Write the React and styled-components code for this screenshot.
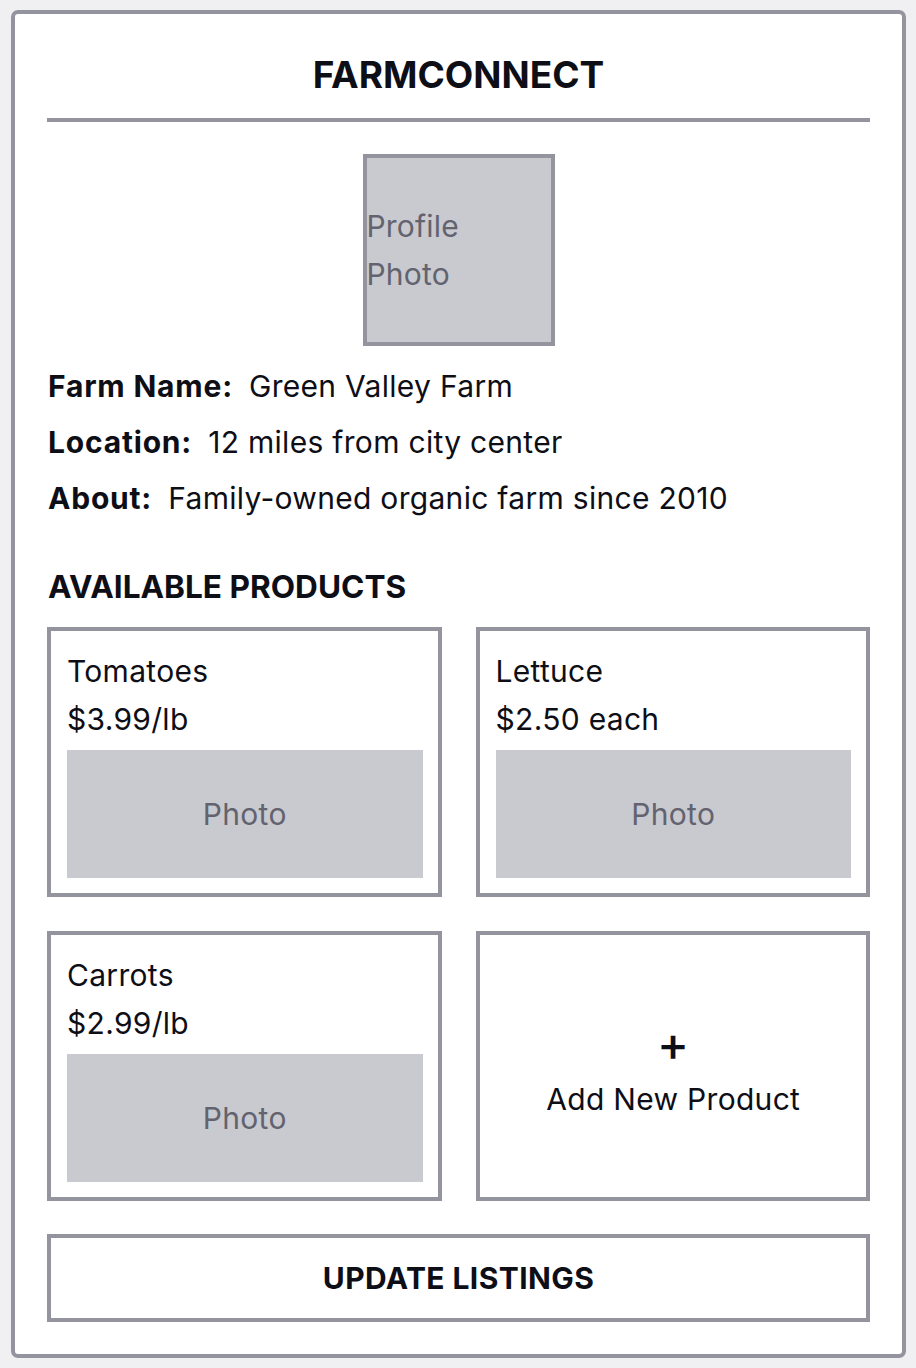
import React from 'react';
import styled, { createGlobalStyle } from 'styled-components';

const GlobalStyle = createGlobalStyle`
  * { box-sizing: border-box; }
  body {
    margin: 0;
    background: #f0f0f2;
    font-family: Inter, "Liberation Sans", sans-serif;
    color: #0e0e16;
  }
`;

const Page = styled.div`
  padding: 10px 10px 11px 11px;
`;

const Card = styled.div`
  background: #ffffff;
  border: 4px solid #93949e;
  border-radius: 7px;
  padding: 32px;
  display: flex;
  flex-direction: column;
`;

const Title = styled.h1`
  margin: 0;
  padding-bottom: 14px;
  border-bottom: 4px solid #93949e;
  font-size: 37px;
  line-height: 58px;
  font-weight: 700;
  text-align: center;
`;

const ProfilePhoto = styled.div`
  align-self: center;
  margin-top: 32px;
  width: 192px;
  height: 192px;
  border: 4px solid #93949e;
  background: #c9cacf;
  color: #62636f;
  font-size: 30px;
  line-height: 48px;
  letter-spacing: 0.2px;
  display: flex;
  align-items: center;
  span { width: min-content; }
`;

const Info = styled.div`
  margin-top: 16px;
  display: flex;
  flex-direction: column;
  gap: 8px;
`;

const InfoRow = styled.div`
  display: flex;
  gap: 16px;
  font-size: 30px;
  line-height: 48px;
  letter-spacing: 0.3px;
  padding-left: 1px;
`;

const Label = styled.span`
  font-weight: 700;
  letter-spacing: 0.8px;
`;

const SectionTitle = styled.h2`
  margin: 41px 0 16px;
  padding-left: 1px;
  font-size: 31.6px;
  line-height: 48px;
  font-weight: 700;
`;

const Grid = styled.div`
  display: grid;
  grid-template-columns: 1fr 1fr;
  gap: 34px;
`;

const ProductCard = styled.div`
  height: 270px;
  border: 4px solid #93949e;
  padding: 16px 15px 15px 16px;
  display: flex;
  flex-direction: column;
  font-size: 30px;
  line-height: 48px;
  letter-spacing: 0.3px;
`;

const PhotoBox = styled.div`
  margin-top: 7px;
  height: 128px;
  background: #c9cacf;
  color: #62636f;
  display: flex;
  align-items: center;
  justify-content: center;
`;

const AddCard = styled(ProductCard)`
  align-items: center;
  justify-content: center;
  padding-bottom: 5px;
`;

const PlusSign = styled.div`
  font-size: 48px;
  font-weight: 500;
  line-height: 48px;
`;

const AddLabel = styled.div`
  margin-top: 7px;
`;

const UpdateButton = styled.button`
  margin-top: 33px;
  height: 88px;
  border: 4px solid #93949e;
  background: #ffffff;
  font-family: inherit;
  font-size: 30px;
  font-weight: 700;
  letter-spacing: 0.4px;
  color: #0e0e16;
  cursor: pointer;
`;

const products = [
  { name: 'Tomatoes', price: '$3.99/lb' },
  { name: 'Lettuce', price: '$2.50 each' },
  { name: 'Carrots', price: '$2.99/lb' },
];

const App = () => {
  return (
    <Page>
      <GlobalStyle />
      <Card>
        <Title>FARMCONNECT</Title>

        <ProfilePhoto>
          <span>Profile Photo</span>
        </ProfilePhoto>

        <Info>
          <InfoRow>
            <Label>Farm Name:</Label>
            <span>Green Valley Farm</span>
          </InfoRow>
          <InfoRow>
            <Label>Location:</Label>
            <span>12 miles from city center</span>
          </InfoRow>
          <InfoRow>
            <Label>About:</Label>
            <span>Family-owned organic farm since 2010</span>
          </InfoRow>
        </Info>

        <SectionTitle>AVAILABLE PRODUCTS</SectionTitle>
        <Grid>
          {products.map((p) => (
            <ProductCard key={p.name}>
              <div>{p.name}</div>
              <div>{p.price}</div>
              <PhotoBox>Photo</PhotoBox>
            </ProductCard>
          ))}
          <AddCard>
            <PlusSign>+</PlusSign>
            <AddLabel>Add New Product</AddLabel>
          </AddCard>
        </Grid>

        <UpdateButton>UPDATE LISTINGS</UpdateButton>
      </Card>
    </Page>
  );
};

export default App;
